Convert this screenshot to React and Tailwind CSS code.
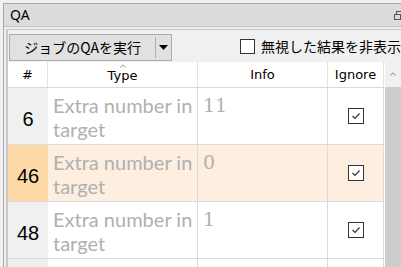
import { ChevronUp } from "lucide-react";

const rows = [
  { n: "6", info: "11", hl: false },
  { n: "46", info: "0", hl: true },
  { n: "48", info: "1", hl: false },
  { n: "", info: "", hl: false },
];

const Check = () => (
  <div className="w-[16px] h-[16px] border border-[#333] bg-white flex items-center justify-center">
    <svg width="12" height="12" viewBox="0 0 12 12">
      <path d="M2.5 6 L5 8.5 L9.5 3.5" fill="none" stroke="#333" strokeWidth="1.2" />
    </svg>
  </div>
);

export default function App() {
  return (
    <div className="w-[401px] h-[267px] overflow-hidden bg-[#f0f0f0] font-['Noto_Sans','Noto_Sans_CJK_JP',sans-serif]">
      <div className="ml-[3px] mt-[3px] border-l border-t border-[#a8a8a8] h-[264px] flex flex-col">
        {/* title bar */}
        <div className="h-[23px] bg-[#dcdcdc] border-b border-[#c4c4c4] flex items-center justify-between pl-[6px] shrink-0">
          <span className="text-[14px] leading-none text-black">QA</span>
          <svg width="9" height="9" viewBox="0 0 9 9" className="mr-[-2px]">
            <rect x="2.5" y="0.5" width="6" height="5" fill="none" stroke="#555" />
            <rect x="0.5" y="3.5" width="6" height="5" fill="#dcdcdc" stroke="#555" />
          </svg>
        </div>
        <div className="flex-1 ml-[2px] mt-[2px] border-l-2 border-t border-[#c8c8c8] flex flex-col">
          {/* toolbar */}
          <div className="h-[32px] flex items-center pl-[1px] shrink-0">
            <div className="mt-[3px] w-[165px] h-[27px] bg-[#e1e1e1] border border-[#adadad] flex items-center">
              <div className="flex-1 text-center text-[14px] text-black font-['Noto_Sans_CJK_JP',sans-serif]">ジョブのQAを実行</div>
              <div className="w-px h-[21px] bg-[#adadad]" />
              <div className="w-[15px] flex justify-center">
                <svg width="9" height="5" viewBox="0 0 9 5"><path d="M0 0 H9 L4.5 5 Z" fill="#000" /></svg>
              </div>
            </div>
            <div className="ml-[68px] mt-[1px] w-[15px] h-[15px] border border-[#333] bg-white" />
            <span className="ml-[6px] mt-[1px] text-[14px] whitespace-nowrap text-black font-['Noto_Sans_CJK_JP',sans-serif]">無視した結果を非表示</span>
          </div>
          {/* table */}
          <div className="flex-1 flex overflow-hidden">
            <div className="w-[376px] shrink-0 bg-white">
              <div className="grid grid-cols-[40px_150px_130px_56px] grid-rows-[25px] h-[25px] text-[13px] text-black font-['DejaVu_Sans',sans-serif]">
                <div className="border-r border-[#e3e3e3] flex items-center justify-center">#</div>
                <div className="border-r border-[#e3e3e3] flex flex-col items-center justify-center relative">
                  <ChevronUp size={10} strokeWidth={1.5} className="absolute top-[-1px] text-[#555]" />
                  <span className="mt-[3px]">Type</span>
                </div>
                <div className="border-r border-[#e3e3e3] flex items-center justify-center">Info</div>
                <div className="border-r border-[#e3e3e3] flex items-center justify-center">Ignore</div>
              </div>
              {rows.map((r, i) => (
                <div key={i} className={`grid grid-cols-[40px_150px_130px_56px] grid-rows-[56px] h-[57px] border-t border-[#dadada] ${r.hl ? "bg-[#fdeedf]" : "bg-white"}`}>
                  <div className={`flex items-center justify-center pt-[6px] text-[20px] text-black font-['Liberation_Sans',sans-serif] ${r.hl ? "bg-[#fdd9a8]" : "bg-[#f0f0f0]"}`}>{r.n}</div>
                  <div className="overflow-hidden whitespace-nowrap border-r border-[#dadada] pl-[5px] pt-[5px] text-[20px] leading-[24px] text-[#b0b0b0] font-['Lato',sans-serif]">
                    {r.n && <>Extra number in<br />target</>}
                  </div>
                  <div className="overflow-hidden border-r border-[#dadada] pl-[5px] pt-[5px] text-[19px] leading-[25px] text-[#b0b0b0] font-['DejaVu_Serif',serif]">{r.info}</div>
                  <div className="border-r border-[#dadada] flex items-center justify-center">{r.n && <Check />}</div>
                </div>
              ))}
            </div>
            <div className="w-px bg-white shrink-0" />
            <div className="flex-1 flex flex-col">
              <div className="h-[25px] bg-[#f0f0f0] flex items-start justify-center pt-[7px]">
                <ChevronUp size={10} strokeWidth={1.5} className="text-[#444]" />
              </div>
              <div className="flex-1 bg-[#cdcdcd]" />
            </div>
          </div>
        </div>
      </div>
    </div>
  );
}
